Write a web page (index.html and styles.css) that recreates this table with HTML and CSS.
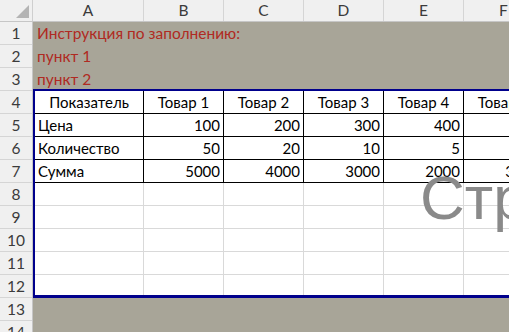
FILE: index.html
```html
<!DOCTYPE html>
<html>
<head>
  <meta charset="utf-8">
  <title>Лист1</title>
  <link rel="stylesheet" href="styles.css">
</head>
<body>
  <div class="sheet">
    <div class="col-heads">
      <div class="corner"><span class="tri"></span></div>
      <div class="col-h col-a">A</div>
      <div class="col-h">B</div>
      <div class="col-h">C</div>
      <div class="col-h">D</div>
      <div class="col-h">E</div>
      <div class="col-h col-f">F</div>
    </div>

    <div class="main">
      <div class="row-heads">
        <div class="row-h">1</div>
        <div class="row-h">2</div>
        <div class="row-h">3</div>
        <div class="row-h">4</div>
        <div class="row-h">5</div>
        <div class="row-h">6</div>
        <div class="row-h">7</div>
        <div class="row-h">8</div>
        <div class="row-h">9</div>
        <div class="row-h">10</div>
        <div class="row-h">11</div>
        <div class="row-h">12</div>
        <div class="row-h">13</div>
        <div class="row-h">14</div>
      </div>

      <div class="cells">
        <div class="note">
          <div class="note-line">Инструкция по заполнению:</div>
          <div class="note-line">пункт 1</div>
          <div class="note-line">пункт 2</div>
        </div>

        <div class="data">
          <div class="r t"><div class="c ctr">Показатель</div><div class="c ctr">Товар 1</div><div class="c ctr">Товар 2</div><div class="c ctr">Товар 3</div><div class="c ctr">Товар 4</div><div class="c ctr">Товар 5</div></div>
          <div class="r t"><div class="c">Цена</div><div class="c num">100</div><div class="c num">200</div><div class="c num">300</div><div class="c num">400</div><div class="c num">600</div></div>
          <div class="r t"><div class="c">Количество</div><div class="c num">50</div><div class="c num">20</div><div class="c num">10</div><div class="c num">5</div><div class="c num">5</div></div>
          <div class="r t"><div class="c">Сумма</div><div class="c num">5000</div><div class="c num">4000</div><div class="c num">3000</div><div class="c num">2000</div><div class="c num">3000</div></div>
          <div class="r"><div class="c"></div><div class="c"></div><div class="c"></div><div class="c"></div><div class="c"></div><div class="c"></div></div>
          <div class="r"><div class="c"></div><div class="c"></div><div class="c"></div><div class="c"></div><div class="c"></div><div class="c"></div></div>
          <div class="r"><div class="c"></div><div class="c"></div><div class="c"></div><div class="c"></div><div class="c"></div><div class="c"></div></div>
          <div class="r"><div class="c"></div><div class="c"></div><div class="c"></div><div class="c"></div><div class="c"></div><div class="c"></div></div>
          <div class="r last"><div class="c"></div><div class="c"></div><div class="c"></div><div class="c"></div><div class="c"></div><div class="c"></div></div>
        </div>

        <div class="fill"></div>
      </div>
    </div>

    <div class="page-mark">Страница 1</div>
  </div>
</body>
</html>
```

FILE: styles.css
```css
* {
  box-sizing: border-box;
  margin: 0;
  padding: 0;
}

body {
  margin: 0;
  width: 509px;
  height: 332px;
  overflow: hidden;
  background: #fff;
  font-family: Lato, "Liberation Sans", sans-serif;
  font-size: 15px;
  color: #000;
}

.sheet {
  position: relative;
  width: 509px;
  height: 332px;
  overflow: hidden;
}

/* column letters */
.col-heads {
  display: flex;
  height: 22px;
  background: #f0f0f0;
  border-bottom: 1px solid #c6c6c6;
}
.corner {
  position: relative;
  width: 33px;
  flex: none;
  border-right: 1px solid #cfcfcf;
}
.tri {
  position: absolute;
  right: 3px;
  bottom: 3px;
  width: 0;
  height: 0;
  border-left: 13px solid transparent;
  border-bottom: 13px solid #b4b4b4;
}
.col-h {
  flex: none;
  width: 80px;
  line-height: 21px;
  font-size: 15.5px;
  text-align: center;
  color: #3b3b3b;
  border-right: 1px solid #d5d5d5;
}
.col-a { width: 111px; }
.col-f { width: 80px; }

.main {
  display: flex;
}

/* row numbers */
.row-heads {
  width: 33px;
  flex: none;
  background: #f0f0f0;
  border-right: 1px solid #c6c6c6;
}
.row-h {
  height: 23px;
  line-height: 22px;
  font-size: 15.5px;
  text-align: center;
  color: #3b3b3b;
  border-bottom: 1px solid #d5d5d5;
}

.cells {
  flex: 1;
}

/* grey block with instructions, rows 1-3 */
.note {
  height: 67px;
  background: #a8a598;
  color: #b02a22;
  font-size: 15.5px;
  padding-left: 4px;
  overflow: hidden;
}
.note-line {
  height: 23px;
  line-height: 22px;
  white-space: nowrap;
}

/* table A4:F12 with navy outline */
.data {
  border-top: 2px solid #00008c;
  border-left: 2px solid #00008c;
  border-bottom: 3px solid #00008c;
  width: 520px;
}
.r {
  display: flex;
  height: 23px;
}
.r.last { height: 20px; }
.c {
  flex: none;
  width: 80px;
  line-height: 22px;
  padding: 0 3px;
  white-space: nowrap;
  overflow: hidden;
  border-right: 1px solid #d9d9d9;
  border-bottom: 1px solid #d9d9d9;
}
.c:first-child { width: 109px; }
.r.last .c { border-bottom: none; }
.r.t .c {
  border-right-color: #000;
  border-bottom-color: #000;
}
.ctr { text-align: center; }
.num { text-align: right; }

.fill {
  height: 60px;
  background: #a8a598;
}

/* page-layout label drawn over the sheet */
.page-mark {
  position: absolute;
  left: 420px;
  top: 167px;
  font-family: "Liberation Sans", sans-serif;
  font-size: 62px;
  line-height: 62px;
  color: #8a8a8a;
  white-space: nowrap;
  pointer-events: none;
}
```
